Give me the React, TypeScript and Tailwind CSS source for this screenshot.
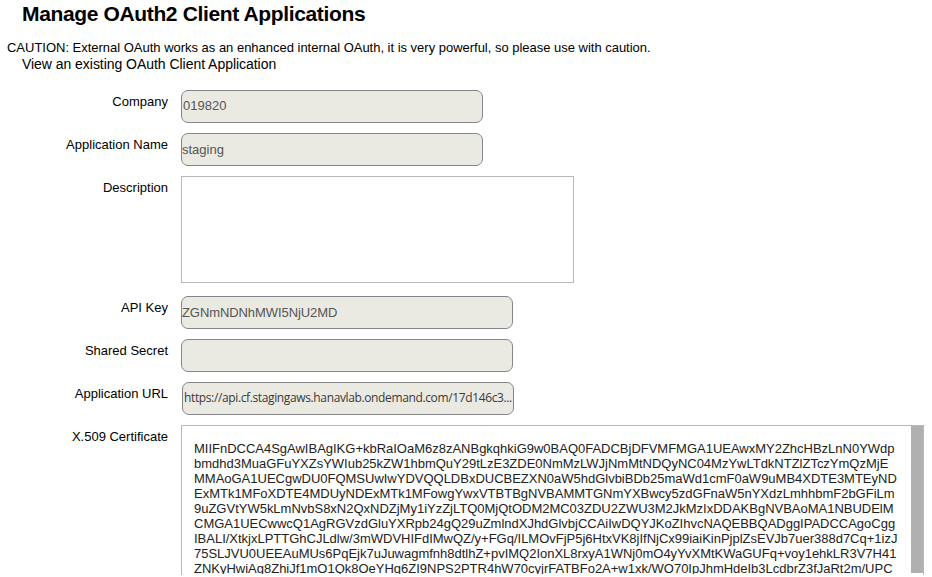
import type { ReactNode } from "react";

const certificate = [
  "MIIFnDCCA4SgAwIBAgIKG+kbRaIOaM6z8zANBgkqhkiG9w0BAQ0FADCBjDFVMFMGA1UEAwxMY2ZhcHBzLnN0YWdp",
  "bmdhd3MuaGFuYXZsYWIub25kZW1hbmQuY29tLzE3ZDE0NmMzLWJjNmMtNDQyNC04MzYwLTdkNTZlZTczYmQzMjE",
  "MMAoGA1UECgwDU0FQMSUwIwYDVQQLDBxDUCBEZXN0aW5hdGlvbiBDb25maWd1cmF0aW9uMB4XDTE3MTEyND",
  "ExMTk1MFoXDTE4MDUyNDExMTk1MFowgYwxVTBTBgNVBAMMTGNmYXBwcy5zdGFnaW5nYXdzLmhhbmF2bGFiLm",
  "9uZGVtYW5kLmNvbS8xN2QxNDZjMy1iYzZjLTQ0MjQtODM2MC03ZDU2ZWU3M2JkMzIxDDAKBgNVBAoMA1NBUDElM",
  "CMGA1UECwwcQ1AgRGVzdGluYXRpb24gQ29uZmlndXJhdGlvbjCCAiIwDQYJKoZIhvcNAQEBBQADggIPADCCAgoCgg",
  "IBALI/XtkjxLPTTGhCJLdlw/3mWDVHIFdIMwQZ/y+FGq/ILMOvFjP5j6HtxVK8jIfNjCx99iaiKinPjplZsEVJb7uer388d7Cq+1izJ",
  "75SLJVU0UEEAuMUs6PqEjk7uJuwagmfnh8dtlhZ+pvIMQ2IonXL8rxyA1WNj0mO4yYvXMtKWaGUFq+voy1ehkLR3V7H41",
  "ZNKyHwiAg8ZhiJf1mO1Qk8OeYHg6ZI9NPS2PTR4hW70cyjrFATBFo2A+w1xk/WO70IpJhmHdeIb3LcdbrZ3fJaRt2m/UPC",
];

function Row({ label, children }: { label: string; children: ReactNode }) {
  return (
    <div className="flex items-start">
      <div className="mr-[13px] w-[168px] shrink-0 pt-1 text-right leading-4 whitespace-nowrap">{label}</div>
      {children}
    </div>
  );
}

function Field({ className, children }: { className: string; children?: ReactNode }) {
  return (
    <div className={`h-[33px] shrink-0 overflow-hidden rounded-[7px] border border-[#85858a] bg-[#eaeae2] whitespace-nowrap ${className}`}>
      {children}
    </div>
  );
}

export default function App() {
  return (
    <div className="h-[577px] w-[932px] overflow-hidden bg-white font-['Liberation_Sans',Arial,sans-serif] text-[13px] text-black">
      <h1 className="pt-[2px] pl-[22px] text-[21px] leading-6 font-bold tracking-[-0.36px] whitespace-nowrap">Manage OAuth2 Client Applications</h1>
      <p className="mt-[14px] pl-[7px] leading-4 tracking-[-0.015px] whitespace-nowrap">
        CAUTION: External OAuth works as an enhanced internal OAuth, it is very powerful, so please use with caution.
      </p>
      <p className="pl-[22px] text-[14px] leading-4 tracking-[-0.04px] whitespace-nowrap">View an existing OAuth Client Application</p>
      <div className="mt-[18px] flex flex-col gap-[10px]">
        <Row label="Company">
          <Field className="w-[302px] pt-[7px] pl-px leading-4 text-[#555]">019820</Field>
        </Row>
        <Row label="Application Name">
          <Field className="w-[302px] pt-2 leading-4 text-[#555]">staging</Field>
        </Row>
        <Row label="Description">
          <div className="mb-[3px] h-[107px] w-[393px] border border-[#b8b8b8]" />
        </Row>
        <Row label="API Key">
          <Field className="w-[332px] pt-2 leading-4 tracking-[-0.08px] text-[#555]">ZGNmNDNhMWI5NjU2MD</Field>
        </Row>
        <Row label="Shared Secret">
          <Field className="w-[332px]" />
        </Row>
        <Row label="Application URL">
          <Field className="ml-px w-[332px] pt-[7px] pl-px font-['Open_Sans',sans-serif] text-[12px] leading-4 tracking-[-0.37px] text-[#3a3a3a]">
            https://api.cf.stagingaws.hanavlab.ondemand.com/17d146c3...
          </Field>
        </Row>
        <Row label="X.509 Certificate">
          <div className="flex h-[150px] w-[743px] border border-b-0 border-[#b8b8b8] text-[13px] text-[#222]">
            <div className="h-[148px] w-[729px] shrink-0 overflow-hidden pt-[15px] pl-3 leading-[15px] tracking-[-0.01px] whitespace-nowrap">
              {certificate.map((line) => (
                <div key={line}>{line}</div>
              ))}
            </div>
            <div className="h-[147px] w-3 shrink-0 bg-[#b0b0b0]" />
          </div>
        </Row>
      </div>
    </div>
  );
}
